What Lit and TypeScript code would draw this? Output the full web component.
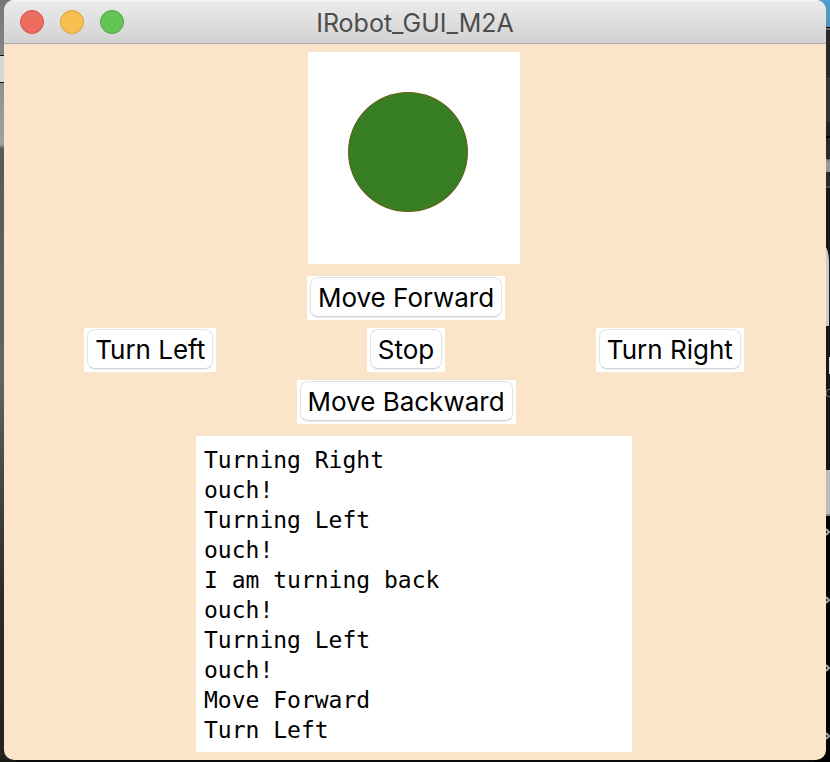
import { LitElement, html, css } from "lit";
import { customElement, property, state } from "lit/decorators.js";

@customElement("push-button")
class PushButton extends LitElement {
  @property() label = "";

  static styles = css`
    :host {
      display: inline-flex;
    }
    .button {
      display: flex;
      height: 44px;
      margin: 0;
      padding: 1px 3px 3px;
      border: 0;
      background: #fff;
      color: #000;
      font: 26px/36px Inter, "Liberation Sans", sans-serif;
      white-space: nowrap;
    }
    .face {
      flex: 1;
      padding: 2px 7px 0;
      border: 1px solid #e4e4e4;
      border-bottom-color: #d4d4d4;
      border-radius: 8px;
      box-shadow: 0 1px 1px #ededed;
    }
    .button:active .face {
      background: #e8e8e8;
    }
  `;

  render() {
    return html`<button class="button" type="button"><span class="face">${this.label}</span></button>`;
  }
}

@customElement("app-root")
class AppRoot extends LitElement {
  @state() private log = [
    "Turning Right",
    "ouch!",
    "Turning Left",
    "ouch!",
    "I am turning back",
    "ouch!",
    "Turning Left",
    "ouch!",
    "Move Forward",
    "Turn Left",
  ];

  static styles = css`
    :host {
      display: block;
      position: relative;
      box-sizing: border-box;
      min-height: 100vh;
      padding: 0 4px 2px;
      overflow: hidden;
      background: #0c0b0a;
    }
    .behind {
      position: absolute;
      top: 0;
      bottom: 0;
      width: 16px;
    }
    .behind-left {
      left: 0;
      background: linear-gradient(
        #77777b 0,
        #858589 55px,
        #111 55px,
        #111 56px,
        #d6d6d6 56px,
        #d6d6d6 82px,
        #111 82px,
        #111 83px,
        #8f8f92 83px,
        #a2a2a4 144px,
        #58595b 149px,
        #626365 380px,
        #454647 480px,
        #2c2a26 600px,
        #24221d 758px,
        #16150f 762px
      );
    }
    .behind-right {
      right: 0;
      background: linear-gradient(
        #4ba0cf 0,
        #4b94bd 27px,
        #000 27px,
        #000 28px,
        #6a6a6a 28px,
        #6a6a6a 30px,
        #292929 30px,
        #292929 78px,
        #444 78px,
        #333 80px,
        #333 122px,
        #222 122px,
        #222 136px,
        #000 136px,
        #000 138px,
        #2a2a2a 138px,
        #2a2a2a 186px,
        #484848 186px,
        #484848 188px,
        #181818 188px,
        #181818 470px,
        #bdbdbd 470px,
        #bdbdbd 514px,
        #888 514px,
        #888 516px,
        #000 516px
      );
    }
    .fragments {
      position: absolute;
      top: 0;
      right: 0;
      width: 4px;
      height: 762px;
    }
    .window {
      position: relative;
      border-radius: 10px;
      overflow: hidden;
      background: #fbe5c9;
    }
    .titlebar {
      display: grid;
      grid-template-columns: 1fr auto 1fr;
      align-items: center;
      box-sizing: border-box;
      height: 44px;
      padding: 0 16px;
      border-top: 1px solid #f6f6f6;
      border-bottom: 1px solid #adaba9;
      background: linear-gradient(#ebebeb, #d2d2d2);
    }
    .lights {
      display: flex;
      gap: 16px;
    }
    .light {
      box-sizing: border-box;
      width: 24px;
      height: 24px;
      padding: 0;
      border: 1px solid;
      border-radius: 50%;
    }
    .close {
      background: #ee6b60;
      border-color: #d3554d;
    }
    .minimize {
      background: #f6bf50;
      border-color: #d9a03c;
    }
    .zoom {
      background: #61c655;
      border-color: #4ba73f;
    }
    .title {
      margin: 0;
      padding-top: 2px;
      color: #4d4d4d;
      font: 400 25px/40px Inter, "Liberation Sans", sans-serif;
    }
    .content {
      display: flex;
      flex-direction: column;
      align-items: center;
      gap: 12px;
      padding: 8px 2px 8px 0;
    }
    .stage {
      display: block;
      width: 212px;
      height: 212px;
      background: #fff;
    }
    .controls {
      display: grid;
      grid-template-columns: 294fr auto 310fr;
      gap: 8px 0;
      align-self: stretch;
      justify-items: center;
    }
    .left {
      grid-column: 1;
    }
    .middle {
      grid-column: 2;
    }
    .log {
      box-sizing: border-box;
      width: 436px;
      max-width: 100%;
      height: 316px;
      margin: 0;
      padding: 9px 8px 7px;
      border: 0;
      outline: 0;
      resize: none;
      overflow: hidden;
      background: #fff;
      color: #000;
      font: 23px/30px "DejaVu Sans Mono", monospace;
    }
  `;

  render() {
    return html`
      <div class="behind behind-left"></div>
      <div class="behind behind-right"></div>
      <svg class="fragments" viewBox="0 0 4 762" aria-hidden="true">
        <path d="M0 159q3 0 3 4v9H0zM3 159h1v13H3z" fill="#999" />
        <path d="M0 247q3 6 3 15v64H0z" fill="#ccc" />
        <path d="M3 357h1v17H3z" fill="#ddd" />
        <path d="M4 389q-4 0-4 4t4 4" fill="none" stroke="#777" />
        <path
          d="M0 529l3 3-3 3M0 597l3 3-3 3M0 665l3 3-3 3M0 733l3 3-3 3"
          fill="none"
          stroke="#aaa"
          stroke-width="2"
        />
      </svg>
      <main class="window">
        <header class="titlebar">
          <div class="lights">
            <button class="light close" type="button" aria-label="Close"></button>
            <button class="light minimize" type="button" aria-label="Minimize"></button>
            <button class="light zoom" type="button" aria-label="Zoom"></button>
          </div>
          <h1 class="title">IRobot_GUI_M2A</h1>
        </header>
        <section class="content">
          <svg class="stage" viewBox="0 0 212 212" role="img" aria-label="Robot">
            <circle cx="100" cy="100" r="60" fill="#8a4a22" />
            <circle cx="100" cy="100" r="59.5" fill="#377d22" />
          </svg>
          <div class="controls">
            <push-button class="middle" label="Move Forward"></push-button>
            <push-button class="left" label="Turn Left"></push-button>
            <push-button label="Stop"></push-button>
            <push-button label="Turn Right"></push-button>
            <push-button class="middle" label="Move Backward"></push-button>
          </div>
          <textarea class="log" aria-label="Robot log" spellcheck="false" .value=${this.log.join("\n")}></textarea>
        </section>
      </main>
    `;
  }
}
